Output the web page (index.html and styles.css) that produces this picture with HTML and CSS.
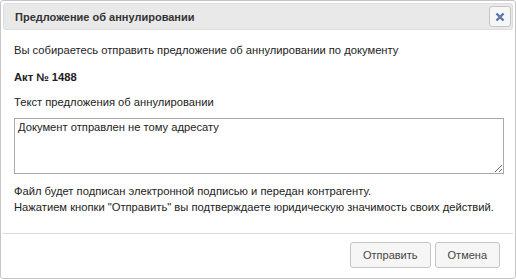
FILE: index.html
```html
<!DOCTYPE html>
<html lang="ru">
  <head>
    <meta charset="UTF-8" />
    <title>Предложение об аннулировании</title>
    <link rel="stylesheet" href="styles.css">
  </head>
  <body>
    <div class="dialog">
      <div class="titlebar">
        <span class="title">Предложение об аннулировании</span>
        <button class="close" type="button" title="Закрыть">
          <svg width="10" height="10" viewBox="0 0 10 10">
            <path d="M1.5 1.5 L8.5 8.5 M8.5 1.5 L1.5 8.5" stroke="#3f6eb5" stroke-width="2.2"/>
            <path d="M2.5 2.5 L7.5 7.5 M7.5 2.5 L2.5 7.5" stroke="#d98a45" stroke-width="0.7" opacity="0.7"/>
          </svg>
        </button>
      </div>
      <div class="content">
        <p class="intro">Вы собираетесь отправить предложение об аннулировании по документу</p>
        <p class="doc">Акт № 1488</p>
        <label for="reason" class="field-label">Текст предложения об аннулировании</label>
        <textarea id="reason" class="reason">Документ отправлен не тому адресату</textarea>
        <p class="note">Файл будет подписан электронной подписью и передан контрагенту.<br>Нажатием кнопки "Отправить" вы подтверждаете юридическую значимость своих действий.</p>
      </div>
      <div class="buttons">
        <button type="button" class="btn">Отправить</button>
        <button type="button" class="btn">Отмена</button>
      </div>
    </div>
  </body>
</html>
```

FILE: styles.css
```css
body {
  margin: 0;
  background: #ffffff;
  font-family: "Liberation Sans", Tahoma, sans-serif;
  font-size: 11.2px;
  color: #222222;
}
.dialog {
  width: 510px;
  height: 273px;
  padding: 2px;
  border: 1px solid #c5c5c5;
  border-radius: 3px;
  display: flex;
  flex-direction: column;
}
.titlebar {
  height: 25px;
  border: 1px solid #dddddd;
  border-radius: 3px;
  background: #e9e9e9;
  display: flex;
  align-items: center;
  justify-content: space-between;
  padding: 0 1px 0 11px;
}
.title {
  font-weight: bold;
  font-size: 11px;
  color: #333333;
}
.close {
  width: 22px;
  height: 21px;
  padding: 0;
  border: 1px solid #c5c5c5;
  border-radius: 3px;
  background: #f6f6f6;
  display: flex;
  align-items: center;
  justify-content: center;
}
.content {
  flex: 1;
  padding: 13px 9px 0 11px;
}
.content p {
  margin: 0;
}
.intro {
  line-height: 14px;
}
.doc {
  font-weight: bold;
  margin-top: 13px !important;
  line-height: 14px;
}
.field-label {
  display: block;
  margin-top: 11px;
  line-height: 14px;
}
.reason {
  display: block;
  box-sizing: border-box;
  width: 490px;
  height: 56px;
  margin-top: 9px;
  padding: 2px 3px;
  border: 1px solid #a9a9a9;
  font-family: "Liberation Sans", Arial, sans-serif;
  font-size: 11.2px;
  color: #222222;
  resize: vertical;
}
.note {
  margin-top: 9px !important;
  line-height: 16px;
}
.buttons {
  border-top: 1px solid #dddddd;
  height: 42px;
  display: flex;
  justify-content: flex-end;
  align-items: center;
  gap: 4px;
  padding: 0 13px 0 0;
}
.btn {
  height: 26px;
  padding: 0 12px;
  border: 1px solid #c5c5c5;
  border-radius: 3px;
  background: #f6f6f6;
  font-family: "Liberation Sans", Arial, sans-serif;
  font-size: 11px;
  color: #454545;
}
```
